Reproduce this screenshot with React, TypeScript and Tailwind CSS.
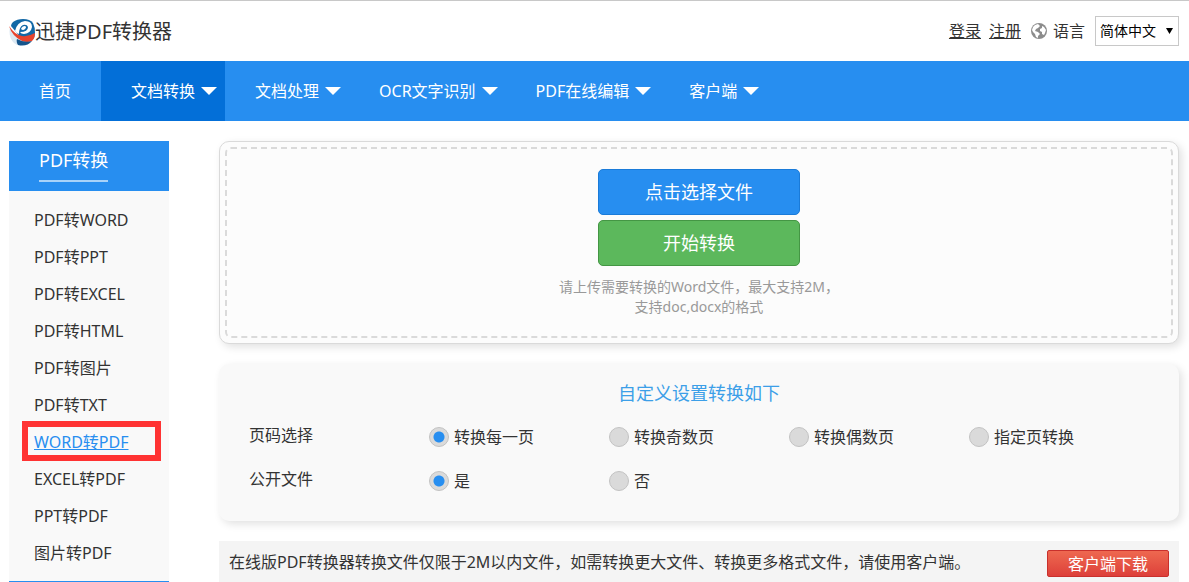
interface NavItem {
  label: string;
  hasMenu: boolean;
  active?: boolean;
}

interface OptionGroup {
  name: string;
  label: string;
  options: string[];
}

const navItems: NavItem[] = [
  { label: '首页', hasMenu: false },
  { label: '文档转换', hasMenu: true, active: true },
  { label: '文档处理', hasMenu: true },
  { label: 'OCR文字识别', hasMenu: true },
  { label: 'PDF在线编辑', hasMenu: true },
  { label: '客户端', hasMenu: true },
];

const converters = [
  'PDF转WORD',
  'PDF转PPT',
  'PDF转EXCEL',
  'PDF转HTML',
  'PDF转图片',
  'PDF转TXT',
  'WORD转PDF',
  'EXCEL转PDF',
  'PPT转PDF',
  '图片转PDF',
];

const optionGroups: OptionGroup[] = [
  { name: 'pages', label: '页码选择', options: ['转换每一页', '转换奇数页', '转换偶数页', '指定页转换'] },
  { name: 'public', label: '公开文件', options: ['是', '否'] },
];

const Logo = () => (
  <svg className="h-7 w-[26px] shrink-0" viewBox="0 0 26 28" aria-hidden="true">
    <path d="M4 4Q8 1 14 1Q21 1 24 5Q26 9 26 15Q26 19 24 21L12 20L2 8Q2 6 4 4Z" fill="#1368a6" />
    <path d="M1 9Q-1 19 5 25Q8 28 13 27L12 22L5 16Z" fill="#dce9f3" />
    <path d="M0 8Q6 17 13 18Q19 19 26 15Q26 20 23 23Q18 25 13 23Q3 18 0 8Z" fill="#e8432c" />
    <path d="M9 27Q7 24 8 21Q15 25 23 23Q18 29 9 27Z" fill="#15558c" />
    <path d="M6 13Q8 4 16 3Q23 3 23 9Q22 15 15 16Q12 16 11 14Q19 14 19 9Q18 6 14 7Q10 9 10 16Q7 15 6 13Z" fill="#fff" />
    <path d="M12 11Q13 8 16 8Q18 9 16 11Q14 13 12 11Z" fill="#fff" />
  </svg>
);

const Globe = () => (
  <svg className="size-4" viewBox="0 0 16 16" aria-hidden="true">
    <circle cx="8" cy="8" r="8" fill="#8c8c8c" />
    <path d="M2 4L4 2L7 1L9 3L7 5L5 6L4 8L7 9L9 11L7 13L7 15L5 14L4 11L2 9L1 7Z" fill="#fff" />
    <path d="M11 3L13 4L15 7L14 10L13 12L11 11L11 9L9 8L9 6L11 5Z" fill="#fff" />
  </svg>
);

const Header = () => (
  <header className="flex h-[61px] items-center justify-between border-t border-[#c8c8c8] pr-[10px] pl-[9px]">
    <div className="flex items-center pt-[2px] text-xl">
      <Logo />
      <h1>迅捷PDF转换器</h1>
    </div>
    <div className="flex items-center gap-2">
      <a href="#login" className="underline">登录</a>
      <a href="#register" className="underline">注册</a>
      <label htmlFor="language" className="flex items-center gap-[6px] pl-[2px]">
        <Globe />
        语言
      </label>
      <div className="relative ml-[2px]">
        <select
          id="language"
          className="h-[30px] w-[84px] appearance-none border border-[#c8c8c8] bg-white pl-1 text-sm text-black"
        >
          <option>简体中文</option>
        </select>
        <svg className="pointer-events-none absolute top-3 right-[6px] h-[6px] w-[7px]" viewBox="0 0 7 6" aria-hidden="true">
          <path d="M0 0H7L3.5 6Z" fill="#000" />
        </svg>
      </div>
    </div>
  </header>
);

const Nav = () => (
  <nav className="flex h-[60px] bg-[#278ef0] pl-[9px] text-white">
    {navItems.map((item) => (
      <a
        key={item.label}
        href="#nav"
        className={`flex items-center gap-[6px] pl-[30px] whitespace-nowrap ${item.hasMenu ? 'pr-2' : 'pr-[30px]'} ${item.active ? 'bg-[#036fd8]' : ''}`}
      >
        {item.label}
        {item.hasMenu && (
          <svg className="h-2 w-4" viewBox="0 0 16 8" aria-hidden="true">
            <path d="M0 0H16L8 8Z" fill="#fff" />
          </svg>
        )}
      </a>
    ))}
  </nav>
);

const Sidebar = () => (
  <aside className="w-40 shrink-0 self-start border-b border-[#278ef0] bg-[#f9f9f9]">
    <div className="flex h-[50px] items-start bg-[#278ef0] pl-[30px] text-lg text-white">
      <h2 className="h-[41px] border-b-2 border-[#a8d2f9] leading-[38px]">PDF转换</h2>
    </div>
    <ul className="py-[10px]">
      {converters.map((name) =>
        name === 'WORD转PDF' ? (
          <li key={name} className="relative flex h-[37px] items-center pl-[25px]">
            <a href="#convert" className="text-[#278ef0] underline">{name}</a>
            {/* Highlight frame */}
            <span className="pointer-events-none absolute -top-[2px] left-[13px] h-10 w-[139px] border-[6px] border-[#ff3333]" />
          </li>
        ) : (
          <li key={name} className="flex h-[37px] items-center pl-[25px]">
            <a href="#convert">{name}</a>
          </li>
        ),
      )}
    </ul>
  </aside>
);

const UploadPanel = () => (
  <section className="rounded-[10px] border border-[#dadada] bg-[#fcfcfc] p-[5px] shadow-[3px_3px_8px_rgba(0,0,0,0.12)]">
    <div className="flex flex-col items-center rounded-md border-2 border-dashed border-[#dadada] pt-5 pb-[19px]">
      <button type="button" className="h-[46px] w-[202px] rounded-[5px] border border-[#1a7bd9] bg-[#278ef0] text-lg text-white">
        点击选择文件
      </button>
      <button type="button" className="mt-[5px] h-[46px] w-[202px] rounded-[5px] border border-[#449644] bg-[#5cb85c] text-lg text-white">
        开始转换
      </button>
      <p className="mt-[11px] text-center text-sm leading-5 text-[#999]">
        请上传需要转换的Word文件，最大支持2M，
        <br />
        支持doc,docx的格式
      </p>
    </div>
  </section>
);

const SettingsPanel = () => (
  <section className="mt-5 rounded-[10px] bg-[#f9f9f9] px-[30px] pt-4 pb-[18px] shadow-[3px_3px_8px_rgba(0,0,0,0.12)]">
    <h2 className="mb-2 text-center text-lg leading-[27px] text-[#3c9fe8]">自定义设置转换如下</h2>
    {optionGroups.map((group) => (
      <fieldset key={group.name} className="flex h-11 items-center">
        <legend className="float-left w-[180px] shrink-0 pb-1 leading-9">{group.label}</legend>
        {group.options.map((option, index) => (
          <label key={option} className="flex w-[180px] items-center gap-[5px]">
            <input
              type="radio"
              name={group.name}
              defaultChecked={index === 0}
              className="size-5 appearance-none rounded-full border border-[#c3c3c3] bg-[#dadada] checked:bg-[radial-gradient(circle,#278ef0_5px,#dadada_6px)]"
            />
            {option}
          </label>
        ))}
      </fieldset>
    ))}
  </section>
);

const DownloadBar = () => (
  <section className="mt-5 flex items-start justify-between bg-[#f4f4f4] px-[10px] py-[9px]">
    <p>在线版PDF转换器转换文件仅限于2M以内文件，如需转换更大文件、转换更多格式文件，请使用客户端。</p>
    <button
      type="button"
      className="h-[27px] w-[122px] shrink-0 rounded-[2px] border border-[#c9302c] bg-linear-to-b from-[#ee6850] to-[#dd3f3a] leading-6 text-white"
    >
      客户端下载
    </button>
  </section>
);

const App = () => {
  return (
    <div className="bg-white font-['Noto_Sans','Noto_Sans_CJK_SC',sans-serif] text-base leading-6 text-[#333]">
      <Header />
      <Nav />
      <div className="flex gap-[50px] pt-5 pr-[10px] pl-[9px]">
        <Sidebar />
        <main className="min-w-0 flex-1">
          <UploadPanel />
          <SettingsPanel />
          <DownloadBar />
        </main>
      </div>
    </div>
  );
};

export default App;
